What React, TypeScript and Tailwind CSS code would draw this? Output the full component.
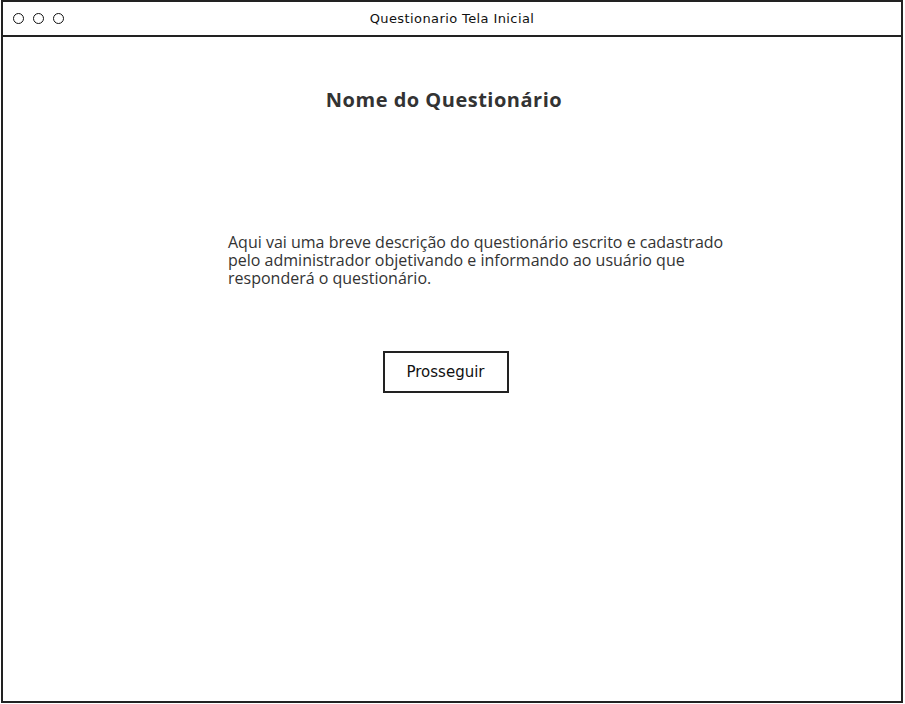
export default function App() {
  return (
    <div className="w-[905px] h-[704px] bg-white pl-px">
      <div className="flex flex-col w-[902px] h-[703px] border-2 border-[#222] bg-white">
        {/* Title bar */}
        <div className="relative flex items-center h-[35px] border-b-2 border-[#222]">
          <div className="flex items-center gap-[9px] pl-[10px]">
            <span className="w-[11px] h-[11px] rounded-full border-[1.5px] border-[#111]" />
            <span className="w-[11px] h-[11px] rounded-full border-[1.5px] border-[#111]" />
            <span className="w-[11px] h-[11px] rounded-full border-[1.5px] border-[#111]" />
          </div>
          <div
            className="absolute inset-0 flex items-center justify-center text-[13px] text-[#111] tracking-[0.4px]"
            style={{ fontFamily: '"Comic Sans MS", "DejaVu Sans", sans-serif' }}
          >
            Questionario Tela Inicial
          </div>
        </div>

        {/* Content */}
        <main className="flex flex-col items-center flex-1" style={{ fontFamily: '"Open Sans", "Noto Sans", sans-serif' }}>
          <h1 className="mt-[50px] -ml-[16px] text-[20px] font-bold text-[#333] leading-[26px] tracking-[0.5px]">
            Nome do Questionário
          </h1>
          <p className="mt-[120px] self-start ml-[225px] w-[520px] text-[16px] leading-[18px] text-[#333]">
            Aqui vai uma breve descrição do questionário escrito e cadastrado
            <br />
            pelo administrador objetivando e informando ao usuário que
            <br />
            responderá o questionário.
          </p>
          <button
            className="mt-[64px] -ml-[13px] w-[126px] h-[42px] border-2 border-[#222] bg-white text-[15px] text-[#111]"
            style={{ fontFamily: '"Comic Sans MS", "DejaVu Sans", sans-serif' }}
          >
            Prosseguir
          </button>
        </main>
      </div>
    </div>
  )
}
